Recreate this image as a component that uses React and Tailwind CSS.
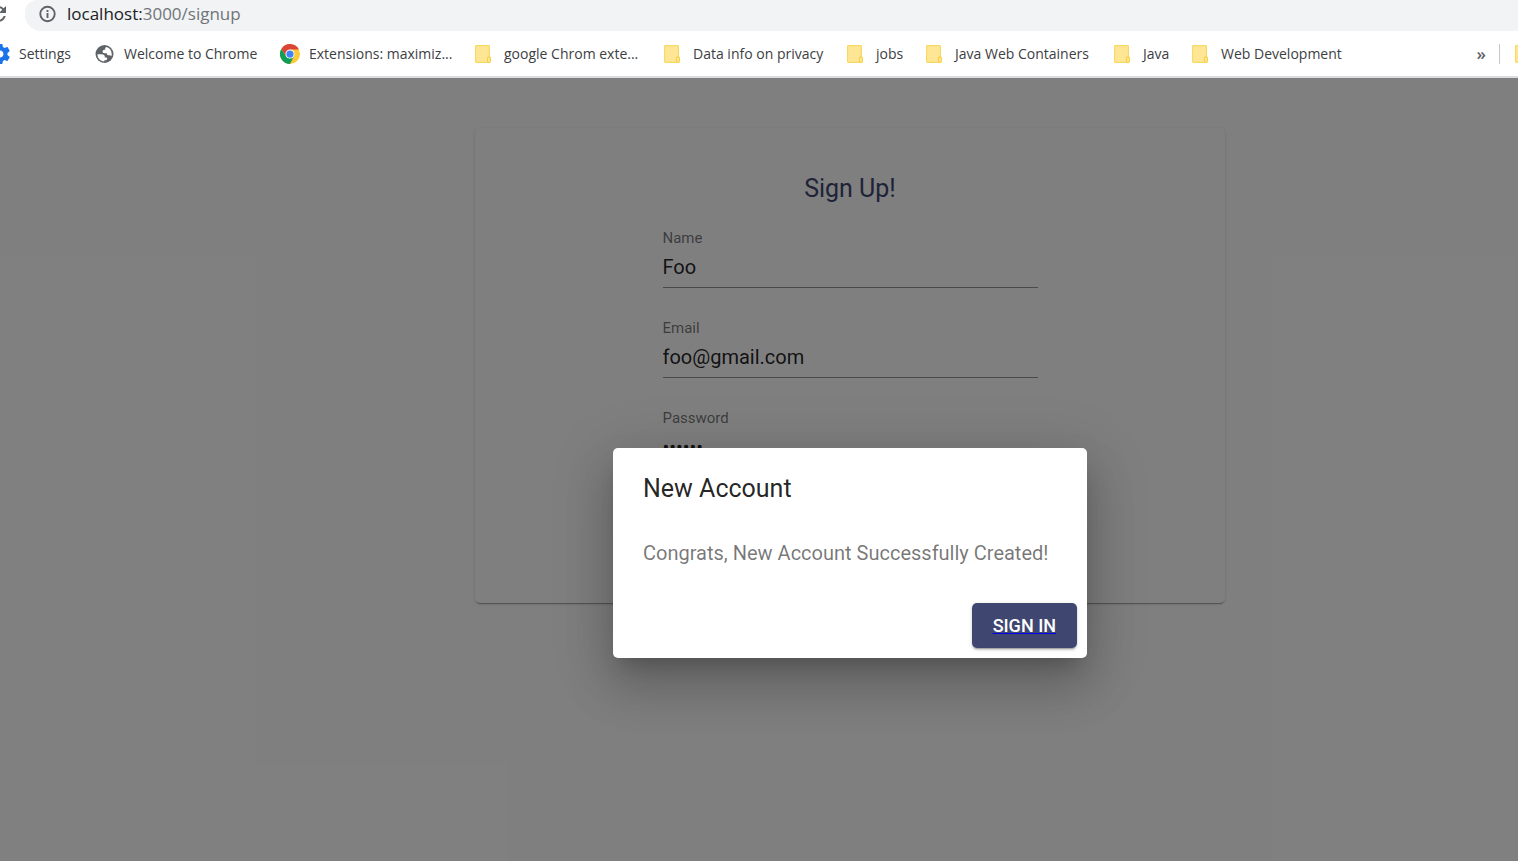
const uiFont = "font-['Open_Sans',sans-serif]";

function FolderIcon() {
  return (
    <svg className="h-5 w-5 shrink-0" viewBox="0 0 20 20" aria-hidden="true">
      <rect x="0.6" y="1.6" width="13.800" height="16.800" rx="0.800" fill="#ffe694" stroke="#f8d964" strokeWidth="1.200" />
      <rect x="12.500" y="12.900" width="3" height="5.500" rx="1.400" fill="#ffe694" stroke="#f5d04c" strokeWidth="1.100" />
    </svg>
  );
}

function GearIcon() {
  return (
    <svg className="h-5 w-5 shrink-0" viewBox="2 2 20 20" fill="#1a73e8" aria-hidden="true">
      <path d="M19.43 12.98c.04-.32.07-.64.07-.98s-.03-.66-.07-.98l2.11-1.65c.19-.15.24-.42.12-.64l-2-3.46c-.12-.22-.39-.3-.61-.22l-2.49 1c-.52-.4-1.08-.73-1.69-.98l-.38-2.65C14.46 2.18 14.25 2 14 2h-4c-.25 0-.46.18-.49.42l-.38 2.65c-.61.25-1.17.59-1.69.98l-2.49-1c-.23-.09-.49 0-.61.22l-2 3.46c-.13.22-.07.49.12.64l2.11 1.65c-.04.32-.07.65-.07.98s.03.66.07.98l-2.11 1.65c-.19.15-.24.42-.12.64l2 3.46c.12.22.39.3.61.22l2.49-1c.52.4 1.08.73 1.69.98l.38 2.65c.03.24.24.42.49.42h4c.25 0 .46-.18.49-.42l.38-2.65c.61-.25 1.17-.59 1.69-.98l2.49 1c.23.09.49 0 .61-.22l2-3.46c.12-.22.07-.49-.12-.64l-2.11-1.65zM12 15.5c-1.93 0-3.5-1.57-3.5-3.5s1.57-3.5 3.5-3.5 3.5 1.57 3.5 3.5-1.57 3.5-3.5 3.5z" />
    </svg>
  );
}

function GlobeIcon() {
  return (
    <svg className="h-5 w-5 shrink-0" viewBox="0 0 20 20" aria-hidden="true">
      <circle cx="9.500" cy="10" r="9" fill="#5f6368" />
      <path
        fill="#fff"
        d="M2.500 10.200h4.300c1.900 0 3 .9 3 2.400v.9h1.600c.5 0 .8.4.8.900 0 1.200-.8 1.800-1.900 1.800h-1v1.200C5.500 17.300 2.300 14.200 2.500 10.200z"
      />
      <path
        fill="#fff"
        d="M11.500 3.100c3.200.9 5.200 3.600 5.200 6.900 0 .8-.1 1.500-.4 2.200-.4-.7-1-1-1.900-1h-1.200c-.8 0-1.300-.5-1.300-1.200v-.8H9.600c-1.300 0-2-.7-2-1.700s.8-1.700 1.800-1.700h.7V5c0-1 .5-1.600 1.400-1.900z"
      />
    </svg>
  );
}

function ChromeIcon() {
  return (
    <svg className="h-5 w-5 shrink-0" viewBox="0 0 48 48" aria-hidden="true">
      <circle cx="24" cy="24" r="24" fill="#fdc935" />
      <path d="M24 13H45.300A24 24 0 0 0 3.200 12L14.500 29.500z" fill="#db4437" />
      <path d="M3.200 12A24 24 0 0 0 24 48L33.500 29.500 24 35 14.500 29.500z" fill="#0f9d58" />
      <circle cx="24" cy="24" r="11" fill="#fff" />
      <circle cx="24" cy="24" r="8.700" fill="#4285f4" />
    </svg>
  );
}

const bookmarks = [
  { label: "Settings", icon: <GearIcon />, width: "w-[105px]" },
  { label: "Welcome to Chrome", icon: <GlobeIcon />, width: "w-[185px]" },
  { label: "Extensions: maximiz...", icon: <ChromeIcon />, width: "w-[195px]" },
  { label: "google Chrom exte...", icon: <FolderIcon />, width: "w-[189px]" },
  { label: "Data info on privacy", icon: <FolderIcon />, width: "w-[183px]" },
  { label: "jobs", icon: <FolderIcon />, width: "w-[79px]" },
  { label: "Java Web Containers", icon: <FolderIcon />, width: "w-[188px]" },
  { label: "Java", icon: <FolderIcon />, width: "w-[78px]" },
  { label: "Web Development", icon: <FolderIcon />, width: "w-[170px]" },
];

function BrowserBar() {
  return (
    <header className={`relative z-10 overflow-hidden border-b-2 border-[#dadce0] bg-white ${uiFont}`}>
      <div className="flex h-[31px]">
        <button type="button" aria-label="Reload" className="-ml-[14px] mr-[14px] flex w-[25px] items-center pb-1">
          <svg className="h-6 w-6 shrink-0" viewBox="0 0 24 24" fill="#5f6368" aria-hidden="true">
            <path d="M17.650 6.350C16.200 4.900 14.210 4 12 4c-4.420 0-7.990 3.580-7.990 8s3.570 8 7.990 8c3.730 0 6.840-2.550 7.730-6h-2.080c-.82 2.330-3.040 4-5.650 4-3.310 0-6-2.690-6-6s2.690-6 6-6c1.660 0 3.140.69 4.220 1.780L13 11h7V4l-2.350 2.350z" />
          </svg>
        </button>
        <div className="flex flex-1 items-center gap-[10px] rounded-bl-2xl rounded-tl-xl bg-[#f1f3f4] pb-1 pl-3">
          <svg className="h-5 w-5" viewBox="0 0 20 20" fill="none" stroke="#5f6368" aria-hidden="true">
            <circle cx="10.500" cy="10" r="7.200" strokeWidth="1.900" />
            <path d="M10.500 9v5M10.500 6v1.900" strokeWidth="1.900" />
          </svg>
          <span className="text-[17px] leading-6 text-[#202124]">
            localhost:<span className="text-[#70757a]">3000/signup</span>
          </span>
        </div>
      </div>
      <nav className="-ml-[10px] flex h-[45px] items-center" aria-label="Bookmarks">
        {bookmarks.map((b) => (
          <a key={b.label} href="#" className={`flex shrink-0 items-center gap-[9px] whitespace-nowrap text-[14px] text-[#3c4043] ${b.width}`}>
            {b.icon}
            {b.label}
          </a>
        ))}
        <button type="button" aria-label="More bookmarks" className="ml-auto mr-[13px] text-[17px] font-semibold text-[#5f6368]">
          »
        </button>
        <span className="mr-[15px] h-5 w-px bg-[#c4c7ca]" />
        <span className="w-[3px] overflow-hidden"><FolderIcon /></span>
      </nav>
    </header>
  );
}

function Field({ id, label, type, value }) {
  return (
    <div className="flex flex-col">
      <label htmlFor={id} className="text-[15px] leading-5 text-black/54">{label}</label>
      <input
        id={id}
        type={type}
        defaultValue={value}
        className="h-10 w-full border-b border-black/42 bg-transparent pb-[2px] text-[20px] text-black/87 outline-none"
      />
    </div>
  );
}

export default function App() {
  return (
    <div className="flex min-h-screen flex-col bg-white font-[Roboto,sans-serif]">
      <BrowserBar />
      <main className="relative flex flex-1 justify-center overflow-hidden pl-[182px] pt-[50px]">
        <form className="flex h-fit w-full max-w-[750px] flex-col items-center rounded-[5px] pb-[135px] pt-10 shadow-[0_3px_1px_-2px_rgba(0,0,0,0.2),0_1px_1px_0_rgba(0,0,0,0.14),0_1px_4px_0_rgba(0,0,0,0.12)]">
          <h1 className="text-[25px] leading-[42px] text-[#3f4771]">Sign Up!</h1>
          <div className="mt-[18px] flex w-1/2 flex-col gap-[30px]">
            <Field id="name" label="Name" type="text" value="Foo" />
            <Field id="email" label="Email" type="text" value="foo@gmail.com" />
            <Field id="password" label="Password" type="password" value="foobar" />
          </div>
        </form>
        <div className="absolute inset-0 flex items-start justify-center bg-black/50 pl-[182px] pt-[370px]">
          <div
            role="dialog"
            aria-labelledby="dialog-title"
            className="flex w-[474px] flex-col rounded-[5px] bg-white shadow-[0_14px_19px_-9px_rgba(0,0,0,0.2),0_30px_48px_4px_rgba(0,0,0,0.14),0_11px_58px_10px_rgba(0,0,0,0.12)]"
          >
            <h2 id="dialog-title" className="px-[30px] pb-[18px] pt-5 text-[25px] leading-[42px] text-black/87">New Account</h2>
            <p className="px-[30px] pb-[35px] pt-[10px] text-[20px] leading-[30px] text-black/54">
              Congrats, New Account Successfully Created!
            </p>
            <div className="flex justify-end p-[10px] pt-0">
              <a
                href="#"
                className="rounded-[5px] bg-[#3f4771] px-[21px] py-[8px] text-[18px] font-medium leading-[29px] text-white underline decoration-[#0000ee] shadow-[0_3px_1px_-2px_rgba(0,0,0,0.2),0_2px_2px_0_rgba(0,0,0,0.14),0_1px_5px_0_rgba(0,0,0,0.12)]"
              >
                SIGN IN
              </a>
            </div>
          </div>
        </div>
      </main>
    </div>
  );
}
